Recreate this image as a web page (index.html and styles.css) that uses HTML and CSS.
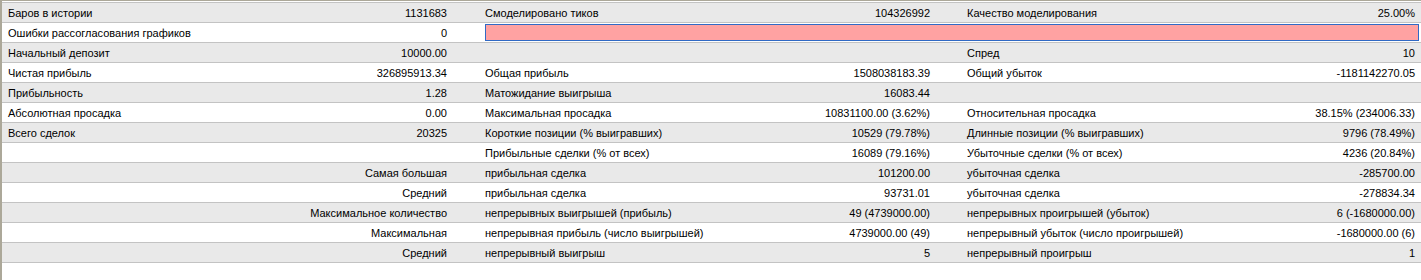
FILE: index.html
```html
<!DOCTYPE html>
<html lang="ru">
<head>
<meta charset="utf-8">
<title>Отчёт</title>
<link rel="stylesheet" href="styles.css">
</head>
<body>
<div class="frame">
  <div class="table">
    <div class="row alt">
      <div class="c a">Баров в истории</div><div class="c b">1131683</div>
      <div class="c cc">Смоделировано тиков</div><div class="c d">104326992</div>
      <div class="c e">Качество моделирования</div><div class="c f">25.00%</div>
    </div>
    <div class="row">
      <div class="c a">Ошибки рассогласования графиков</div><div class="c b">0</div>
      <div class="barcell"><div class="bar"></div></div>
    </div>
    <div class="row alt">
      <div class="c a">Начальный депозит</div><div class="c b">10000.00</div>
      <div class="c cc"></div><div class="c d"></div>
      <div class="c e">Спред</div><div class="c f">10</div>
    </div>
    <div class="row">
      <div class="c a">Чистая прибыль</div><div class="c b">326895913.34</div>
      <div class="c cc">Общая прибыль</div><div class="c d">1508038183.39</div>
      <div class="c e">Общий убыток</div><div class="c f">-1181142270.05</div>
    </div>
    <div class="row alt">
      <div class="c a">Прибыльность</div><div class="c b">1.28</div>
      <div class="c cc">Матожидание выигрыша</div><div class="c d">16083.44</div>
      <div class="c e"></div><div class="c f"></div>
    </div>
    <div class="row">
      <div class="c a">Абсолютная просадка</div><div class="c b">0.00</div>
      <div class="c cc">Максимальная просадка</div><div class="c d">10831100.00 (3.62%)</div>
      <div class="c e">Относительная просадка</div><div class="c f">38.15% (234006.33)</div>
    </div>
    <div class="row alt">
      <div class="c a">Всего сделок</div><div class="c b">20325</div>
      <div class="c cc">Короткие позиции (% выигравших)</div><div class="c d">10529 (79.78%)</div>
      <div class="c e">Длинные позиции (% выигравших)</div><div class="c f">9796 (78.49%)</div>
    </div>
    <div class="row">
      <div class="c a"></div><div class="c b"></div>
      <div class="c cc">Прибыльные сделки (% от всех)</div><div class="c d">16089 (79.16%)</div>
      <div class="c e">Убыточные сделки (% от всех)</div><div class="c f">4236 (20.84%)</div>
    </div>
    <div class="row alt">
      <div class="c ab">Самая большая</div>
      <div class="c cc">прибыльная сделка</div><div class="c d">101200.00</div>
      <div class="c e">убыточная сделка</div><div class="c f">-285700.00</div>
    </div>
    <div class="row">
      <div class="c ab">Средний</div>
      <div class="c cc">прибыльная сделка</div><div class="c d">93731.01</div>
      <div class="c e">убыточная сделка</div><div class="c f">-278834.34</div>
    </div>
    <div class="row alt">
      <div class="c ab">Максимальное количество</div>
      <div class="c cc">непрерывных выигрышей (прибыль)</div><div class="c d">49 (4739000.00)</div>
      <div class="c e">непрерывных проигрышей (убыток)</div><div class="c f">6 (-1680000.00)</div>
    </div>
    <div class="row">
      <div class="c ab">Максимальная</div>
      <div class="c cc">непрерывная прибыль (число выигрышей)</div><div class="c d">4739000.00 (49)</div>
      <div class="c e">непрерывный убыток (число проигрышей)</div><div class="c f">-1680000.00 (6)</div>
    </div>
    <div class="row alt">
      <div class="c ab">Средний</div>
      <div class="c cc">непрерывный выигрыш</div><div class="c d">5</div>
      <div class="c e">непрерывный проигрыш</div><div class="c f">1</div>
    </div>
  </div>
</div>
</body>
</html>
```

FILE: styles.css
```css
html, body {
  margin: 0;
  padding: 0;
  background: #ffffff;
}
body {
  font-family: "Liberation Sans", Arial, sans-serif;
  font-size: 11px;
  color: #000000;
}
.frame {
  height: 280px;
  box-sizing: border-box;
  border-top: 1px solid #aca899;
  border-left: 2px solid #aca899;
  padding-top: 1px;
}
.table {
  border-top: 1px solid #c3c3c3;
}
.row {
  display: grid;
  grid-template-columns: 238px 215px 245px 238px 242px 1fr;
  grid-template-rows: 19px;
  height: 19px;
  border-bottom: 1px solid #c3c3c3;
  background: #ffffff;
}
.row.alt {
  background: #e9e9e9;
}
.c {
  line-height: 21px;
  white-space: nowrap;
  overflow: visible;
}
.a { padding-left: 6px; }
.b { text-align: right; padding-right: 8px; }
.ab { grid-column: 1 / 3; text-align: right; padding-right: 8px; }
.cc { padding-left: 30px; }
.d { text-align: right; padding-right: 8px; }
.e { padding-left: 29px; }
.f { text-align: right; padding-right: 6px; }
.barcell {
  grid-column: 3 / 7;
  padding: 1px 2px 1px 30px;
}
.bar {
  height: 17px;
  box-sizing: border-box;
  border: 1px solid #316ac5;
  background: #ffa2a2;
}
```
